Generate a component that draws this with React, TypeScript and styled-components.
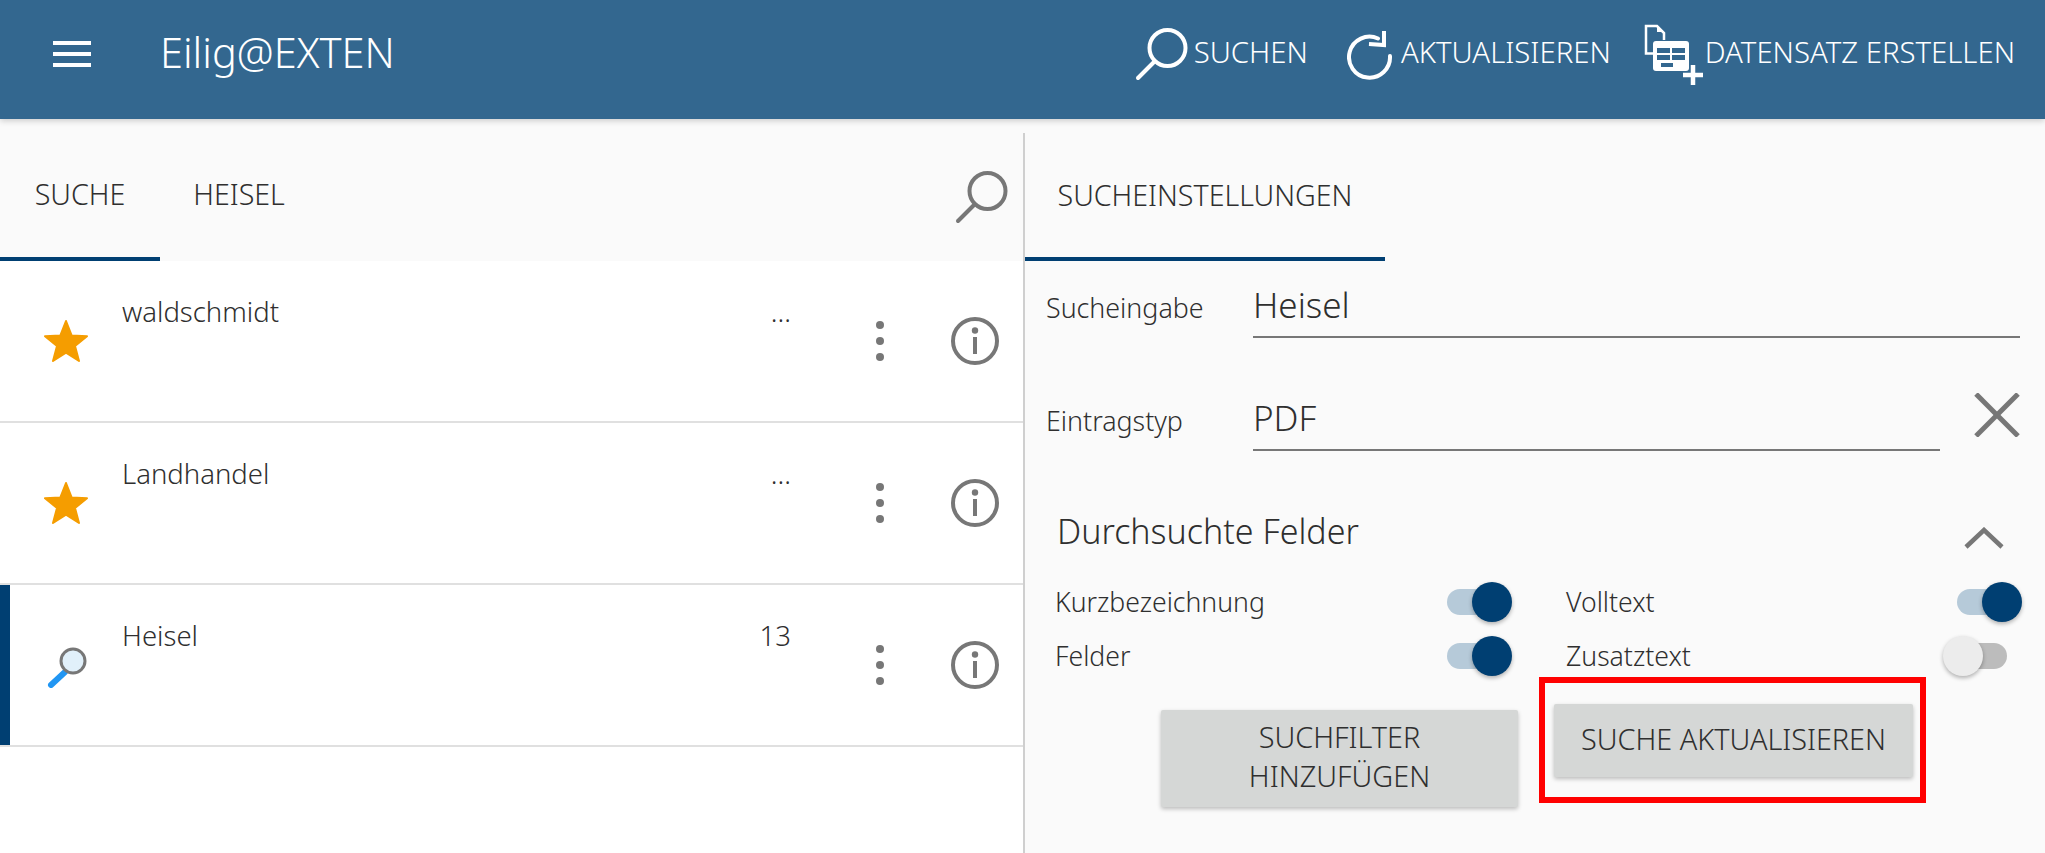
import React from 'react';
import styled, {createGlobalStyle} from 'styled-components';

const GlobalStyle = createGlobalStyle`
  html, body {
    margin: 0;
    padding: 0;
    height: 100%;
    background: #fafafa;
    font-family: "Noto Sans", "Open Sans", sans-serif;
    font-weight: 300;
    color: #2f2f2f;
    overflow: hidden;
  }
  * {
    box-sizing: border-box;
  }
`;

const Page = styled.div`
  width: 2045px;
  height: 853px;
  display: flex;
  flex-direction: column;
  position: relative;
`;

const Header = styled.header`
  flex: 0 0 119px;
  display: flex;
  align-items: flex-start;
  background: #33678f;
  color: #fff;
  box-shadow: 0 2px 6px rgba(0, 0, 0, 0.18);
  position: relative;
  z-index: 2;
`;

const Burger = styled.div`
  width: 38px;
  margin: 41px 0 0 53px;
  height: 26px;
  display: flex;
  flex-direction: column;
  justify-content: space-between;
  span {
    display: block;
    height: 4px;
    background: #fff;
  }
`;

const Title = styled.div`
  margin: 25px 0 0 69px;
  font-size: 41.5px;
  line-height: 54px;
`;

const Actions = styled.div`
  margin-left: auto;
  padding: 25px 30px 0 0;
  display: flex;
  align-items: flex-start;
`;

const Action = styled.div<{$gap: number; $left: number}>`
  display: flex;
  align-items: center;
  height: 60px;
  gap: ${p => p.$gap}px;
  margin-left: ${p => p.$left}px;
  font-size: 29.3px;
  white-space: nowrap;
`;

const ActionLabel = styled.span`
  margin-bottom: 6px;
`;

const Main = styled.div`
  flex: 1;
  display: flex;
  min-height: 0;
`;

const LeftPane = styled.section`
  flex: 0 0 1023px;
  display: flex;
  flex-direction: column;
`;

const RightPane = styled.section`
  flex: 1;
  margin-top: 14px;
  border-left: 2px solid #cfcfcf;
  display: flex;
  flex-direction: column;
`;

const TabBar = styled.div<{$height: number}>`
  flex: 0 0 ${p => p.$height}px;
  display: flex;
  align-items: stretch;
  position: relative;
`;

const Tab = styled.div<{$active?: boolean; $width: number; $top: number; $bottom: number}>`
  width: ${p => p.$width}px;
  padding: ${p => p.$top}px 0 ${p => p.$bottom}px;
  display: flex;
  align-items: center;
  justify-content: center;
  font-size: 28.6px;
  border-bottom: 4px solid ${p => (p.$active ? '#003f72' : 'transparent')};
`;

const TabSearch = styled.div`
  margin-left: auto;
  padding: 52px 15px 0 0;
`;

const List = styled.div`
  flex: 1;
  background: #fff;
`;

const Row = styled.div<{$selected?: boolean}>`
  height: 162px;
  padding-left: 10px;
  display: flex;
  align-items: center;
  border-bottom: 2px solid #e0e0e0;
  box-shadow: ${p => (p.$selected ? 'inset 10px 0 0 #003f72' : 'none')};
`;

const RowIcon = styled.div`
  flex: 0 0 112px;
  display: flex;
  justify-content: flex-start;
  padding-left: 33px;
`;

const RowName = styled.div`
  flex: 1;
  align-self: flex-start;
  padding-top: 32px;
  font-size: 27.5px;
  line-height: 38px;
`;

const RowCount = styled.div`
  align-self: flex-start;
  padding-top: 32px;
  font-size: 27.5px;
  line-height: 38px;
  width: 70px;
  text-align: right;
`;

const Kebab = styled.div`
  flex: 0 0 8px;
  margin-left: 85px;
  display: flex;
  flex-direction: column;
  gap: 8px;
  span {
    width: 8px;
    height: 8px;
    border-radius: 50%;
    background: #777;
  }
`;

const InfoSlot = styled.div`
  margin: 0 24px 0 67px;
  height: 48px;
`;

const Form = styled.div`
  flex: 1;
  display: flex;
  flex-direction: column;
  padding: 0 25px 0 21px;
`;

const FieldRow = styled.div<{$top: number}>`
  display: flex;
  align-items: flex-end;
  margin-top: ${p => p.$top}px;
`;

const FieldLabel = styled.label`
  flex: 0 0 207px;
  font-size: 26.8px;
  line-height: 36px;
  padding-bottom: 12px;
`;

const FieldValue = styled.div`
  flex: 1;
  height: 58px;
  font-size: 35px;
  line-height: 50px;
  border-bottom: 2px solid #777;
`;

const ClearIcon = styled.div`
  flex: 0 0 80px;
  display: flex;
  justify-content: flex-end;
  align-self: flex-start;
`;

const SectionHead = styled.div`
  display: flex;
  align-items: center;
  justify-content: space-between;
  margin-top: 58px;
  padding: 0 16px 0 11px;
  font-size: 34px;
  line-height: 44px;
  svg {
    margin-top: 14px;
  }
`;

const SwitchGrid = styled.div`
  display: grid;
  grid-template-columns: 455px 1fr;
  column-gap: 56px;
  margin-top: 22px;
  padding-left: 9px;
`;

const SwitchRow = styled.div`
  height: 54px;
  display: flex;
  align-items: center;
  justify-content: space-between;
  font-size: 26.6px;
`;

const SwitchTrack = styled.div<{$on?: boolean}>`
  position: relative;
  width: 54px;
  height: 26px;
  margin-right: ${p => (p.$on ? '9px' : '13px')};
  border-radius: 13px;
  background: ${p => (p.$on ? '#b6cad9' : '#bcbcbc')};
`;

const SwitchThumb = styled.div<{$on?: boolean}>`
  position: absolute;
  top: -7px;
  ${p => (p.$on ? 'right: -11px;' : 'left: -10px;')}
  width: 40px;
  height: 40px;
  border-radius: 50%;
  background: ${p => (p.$on ? '#003f72' : '#ececec')};
  box-shadow: 0 2px 4px rgba(0, 0, 0, 0.3);
`;

const ButtonRow = styled.div`
  display: flex;
  align-items: flex-start;
  padding-left: 115px;
  gap: 36px;
`;

const ActionButton = styled.button<{$width: number; $height: number; $top: number}>`
  width: ${p => p.$width}px;
  height: ${p => p.$height}px;
  margin-top: ${p => p.$top}px;
  padding: 0 10px 5px;
  display: block;
  border: none;
  border-radius: 2px;
  background: #d5d7d6;
  color: #2f2f2f;
  font-family: inherit;
  font-weight: 300;
  font-size: 28.8px;
  line-height: 39px;
  text-align: center;
  box-shadow: 0 2px 4px rgba(0, 0, 0, 0.25);
`;

const Highlight = styled.div`
  position: absolute;
  left: 1539px;
  top: 677px;
  width: 387px;
  height: 126px;
  border: 6px solid #ff0000;
  pointer-events: none;
`;

const SearchIcon: React.FC<{color: string}> = ({color}) => (
  <svg width="54" height="54" viewBox="0 0 54 54" fill="none" stroke={color} strokeWidth="4" strokeLinecap="round">
    <circle cx="33.5" cy="20" r="18" />
    <line x1="20" y1="34" x2="4" y2="50" />
  </svg>
);

const RefreshIcon = () => (
  <svg width="46" height="52" viewBox="0 0 46 52" fill="none" stroke="#fff" strokeWidth="4" strokeLinecap="round">
    <path d="M31 9.5 A20.5 20.5 0 1 0 43 27" />
    <polyline points="37,2 37,16 22,15" strokeLinecap="butt" />
  </svg>
);

const CreateIcon = () => (
  <svg width="62" height="62" viewBox="0 0 62 62">
    <path d="M13 29.5 H3 V2 H14 L21 9 V16" fill="none" stroke="#fff" strokeWidth="2.5" />
    <path d="M14 1 V8 H21 Z" fill="#fff" />
    <rect x="10" y="17" width="36" height="30" rx="3" fill="#fff" />
    <g fill="#33678f">
      <rect x="14" y="24" width="13" height="5" />
      <rect x="29" y="24" width="13" height="5" />
      <rect x="14" y="31" width="13" height="5" />
      <rect x="29" y="31" width="13" height="5" />
      <rect x="18" y="39" width="12" height="4" />
    </g>
    <path d="M50 41 V61 M40 51 H60" stroke="#fff" strokeWidth="4.5" />
  </svg>
);

const StarIcon = () => (
  <svg width="46" height="44" viewBox="0 0 46 44">
    <path
      d="M23 2 L28.6 16.4 L44 17.2 L32 27 L36 42 L23 33.6 L10 42 L14 27 L2 17.2 L17.4 16.4 Z"
      fill="#f59d00"
      stroke="#f59d00"
      strokeWidth="2"
      strokeLinejoin="round"
    />
  </svg>
);

const LensIcon = () => (
  <svg width="46" height="46" viewBox="0 0 46 46" fill="none">
    <line x1="22" y1="30" x2="8" y2="43" stroke="#2196f3" strokeWidth="6" strokeLinecap="round" />
    <circle cx="30" cy="19" r="12" fill="#e1f0fa" stroke="#777" strokeWidth="3" />
  </svg>
);

const InfoIcon = () => (
  <svg width="48" height="48" viewBox="0 0 48 48" fill="none">
    <circle cx="24" cy="24" r="22" stroke="#777" strokeWidth="4" />
    <circle cx="24" cy="13.5" r="3.2" fill="#777" />
    <line x1="24" y1="20" x2="24" y2="37" stroke="#777" strokeWidth="4" />
  </svg>
);

const CloseIcon = () => (
  <svg width="46" height="44" viewBox="0 0 46 44" stroke="#777" strokeWidth="5">
    <line x1="2" y1="1" x2="44" y2="43" />
    <line x1="44" y1="1" x2="2" y2="43" />
  </svg>
);

const ChevronIcon = () => (
  <svg width="40" height="22" viewBox="0 0 40 22" fill="none" stroke="#777" strokeWidth="4.5">
    <polyline points="2,20 20,3 38,20" />
  </svg>
);

const rows = [
  {name: 'waldschmidt', count: '...', star: true},
  {name: 'Landhandel', count: '...', star: true},
  {name: 'Heisel', count: '13', star: false}
];

const Toggle: React.FC<{on?: boolean}> = ({on}) => (
  <SwitchTrack $on={on}>
    <SwitchThumb $on={on} />
  </SwitchTrack>
);

export default function App() {
  return (
    <Page>
      <GlobalStyle />
      <Header>
        <Burger><span /><span /><span /></Burger>
        <Title>Eilig@EXTEN</Title>
        <Actions>
          <Action $gap={6} $left={0}><SearchIcon color="#fff" /><ActionLabel>SUCHEN</ActionLabel></Action>
          <Action $gap={8} $left={39}><RefreshIcon /><ActionLabel>AKTUALISIEREN</ActionLabel></Action>
          <Action $gap={0} $left={32}><CreateIcon /><ActionLabel>DATENSATZ ERSTELLEN</ActionLabel></Action>
        </Actions>
      </Header>
      <Main>
        <LeftPane>
          <TabBar $height={142}>
            <Tab $active $width={160} $top={10} $bottom={0}>SUCHE</Tab>
            <Tab $width={158} $top={10} $bottom={0}>HEISEL</Tab>
            <TabSearch><SearchIcon color="#777" /></TabSearch>
          </TabBar>
          <List>
            {rows.map((row, i) => (
              <Row key={row.name} $selected={i === 2}>
                <RowIcon>{row.star ? <StarIcon /> : <LensIcon />}</RowIcon>
                <RowName>{row.name}</RowName>
                <RowCount>{row.count}</RowCount>
                <Kebab><span /><span /><span /></Kebab>
                <InfoSlot><InfoIcon /></InfoSlot>
              </Row>
            ))}
          </List>
        </LeftPane>
        <RightPane>
          <TabBar $height={128}>
            <Tab $active $width={360} $top={0} $bottom={2}>SUCHEINSTELLUNGEN</Tab>
          </TabBar>
          <Form>
            <FieldRow $top={19}>
              <FieldLabel>Sucheingabe</FieldLabel>
              <FieldValue>Heisel</FieldValue>
            </FieldRow>
            <FieldRow $top={55}>
              <FieldLabel>Eintragstyp</FieldLabel>
              <FieldValue>PDF</FieldValue>
              <ClearIcon><CloseIcon /></ClearIcon>
            </FieldRow>
            <SectionHead>
              Durchsuchte Felder
              <ChevronIcon />
            </SectionHead>
            <SwitchGrid>
              <SwitchRow>Kurzbezeichnung<Toggle on /></SwitchRow>
              <SwitchRow>Volltext<Toggle on /></SwitchRow>
              <SwitchRow>Felder<Toggle on /></SwitchRow>
              <SwitchRow>Zusatztext<Toggle /></SwitchRow>
            </SwitchGrid>
            <ButtonRow>
              <ActionButton $width={357} $height={97} $top={27}>SUCHFILTER<br />HINZUFÜGEN</ActionButton>
              <ActionButton $width={359} $height={73} $top={21}>SUCHE AKTUALISIEREN</ActionButton>
            </ButtonRow>
          </Form>
        </RightPane>
      </Main>
      <Highlight />
    </Page>
  );
}
